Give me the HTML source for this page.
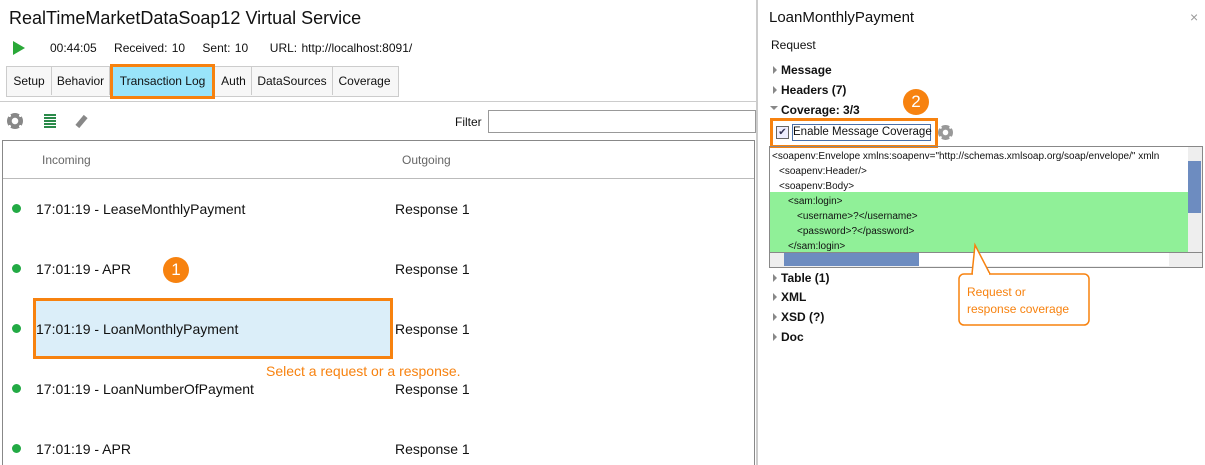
<!DOCTYPE html><html style="overflow:hidden;height:465px"><head><style>
body{margin:0;width:1205px;height:465px;background:#fff;font-family:"Liberation Sans",sans-serif;position:relative;overflow:hidden;color:#111}
.a{position:absolute;white-space:nowrap}
.tab{position:absolute;top:67px;height:28px;line-height:28px;font-size:12px;text-align:center;border-right:1px solid #ccc;background:#f7f7f7}
.row{font-size:14px}
.dot{position:absolute;width:9px;height:9px;border-radius:50%;background:#22aa44}
.tr{font-size:12px;font-weight:bold}
.tri{position:absolute;width:0;height:0;border-top:4px solid transparent;border-bottom:4px solid transparent;border-left:4px solid #888}
.code{font-size:10px;position:absolute;left:772px}
</style></head><body>
<div class="a" style="left:9px;top:8px;font-size:18px">RealTimeMarketDataSoap12 Virtual Service</div>
<div class="a" style="left:13px;top:41px;width:0;height:0;border-top:7px solid transparent;border-bottom:7px solid transparent;border-left:12px solid #2aa838"></div>
<div class="a" style="left:50px;top:41px;font-size:12px;word-spacing:1px">00:44:05&nbsp;&nbsp;&nbsp; Received: 10&nbsp;&nbsp;&nbsp; Sent: 10&nbsp;&nbsp;&nbsp;&nbsp; URL: http://localhost:8091/</div>
<div class="a" style="left:6px;top:66px;width:391px;height:29px;border:1px solid #ccc;background:#f7f7f7"></div>
<div class="tab" style="left:7px;width:44px">Setup</div>
<div class="tab" style="left:52px;width:57px">Behavior</div>
<div class="tab" style="left:110px;width:105px;background:#99e4fa;border:3px solid #f7820f;top:64px;box-sizing:border-box;height:35px;line-height:29px">Transaction Log</div>
<div class="tab" style="left:216px;width:35px;background:none">Auth</div>
<div class="tab" style="left:252px;width:80px;background:none">DataSources</div>
<div class="tab" style="left:333px;width:63px;background:none;border:0">Coverage</div>
<div class="a" style="left:0;top:101px;width:756px;height:1px;background:#ccc"></div>
<div class="a" style="left:7px;top:113px;width:16px;height:16px;border-radius:50%;background:radial-gradient(circle,#fff 3px,#888 3.5px,#888 6px,transparent 6.5px),conic-gradient(#888 0 10%,transparent 0 15%,#888 0 35%,transparent 0 40%,#888 0 60%,transparent 0 65%,#888 0 85%,transparent 0 90%,#888 0)"></div>
<div class="a" style="left:44px;top:114px;width:12px;height:14px;background:repeating-linear-gradient(#2a8a4a 0 2px,#fff 2px 3px)"></div>
<div class="a" style="left:79px;top:115px;width:5px;height:13px;background:#888;transform:rotate(40deg)"></div>
<div class="a" style="left:455px;top:115px;font-size:12px">Filter</div>
<div class="a" style="left:488px;top:110px;width:266px;height:21px;border:1px solid #999"></div>
<div class="a" style="left:2px;top:140px;width:751px;height:330px;border:1px solid #888;border-bottom:0"></div>
<div class="a" style="left:3px;top:178px;width:751px;height:1px;background:#bbb"></div>
<div class="a" style="left:42px;top:153px;font-size:12px;color:#666">Incoming</div>
<div class="a" style="left:402px;top:153px;font-size:12px;color:#666">Outgoing</div>
<div class="a" style="left:33px;top:298px;width:354px;height:55px;background:#dbeef9;border:3px solid #f7820f"></div>
<div class="dot" style="left:12px;top:204px"></div><div class="a row" style="left:36px;top:201px">17:01:19 - LeaseMonthlyPayment</div><div class="a row" style="left:395px;top:201px">Response 1</div>
<div class="dot" style="left:12px;top:264px"></div><div class="a row" style="left:36px;top:261px">17:01:19 - APR</div><div class="a row" style="left:395px;top:261px">Response 1</div>
<div class="dot" style="left:12px;top:324px"></div><div class="a row" style="left:36px;top:321px">17:01:19 - LoanMonthlyPayment</div><div class="a row" style="left:395px;top:321px">Response 1</div>
<div class="dot" style="left:12px;top:384px"></div><div class="a row" style="left:36px;top:381px">17:01:19 - LoanNumberOfPayment</div><div class="a row" style="left:395px;top:381px">Response 1</div>
<div class="dot" style="left:12px;top:444px"></div><div class="a row" style="left:36px;top:441px">17:01:19 - APR</div><div class="a row" style="left:395px;top:441px">Response 1</div>
<div class="a" style="left:163px;top:257px;width:26px;height:26px;border-radius:50%;background:#f7820f;color:#fff;font-size:17px;text-align:center;line-height:26px">1</div>
<div class="a" style="left:266px;top:363px;font-size:14px;color:#f7820f">Select a request or a response.</div>
<div class="a" style="left:756px;top:0;width:2px;height:465px;background:#ccc"></div>
<div class="a" style="left:769px;top:9px;font-size:15px">LoanMonthlyPayment</div>
<div class="a" style="left:1190px;top:9px;font-size:14px;color:#999">×</div>
<div class="a" style="left:771px;top:38px;font-size:12px">Request</div>
<div class="tri" style="left:773px;top:66px"></div><div class="a tr" style="left:781px;top:63px">Message</div>
<div class="tri" style="left:773px;top:86px"></div><div class="a tr" style="left:781px;top:83px">Headers (7)</div>
<div class="a" style="left:770px;top:106px;border-left:4px solid transparent;border-right:4px solid transparent;border-top:4px solid #888"></div><div class="a tr" style="left:781px;top:103px">Coverage: 3/3</div>
<div class="a" style="left:903px;top:89px;width:26px;height:26px;border-radius:50%;background:#f7820f;color:#fff;font-size:17px;text-align:center;line-height:26px">2</div>
<div class="a" style="left:770px;top:118px;width:162px;height:24px;border:3px solid #f7820f"></div>
<div class="a" style="left:776px;top:126px;width:11px;height:11px;border:1px solid #666;background:#eef;font-size:10px;line-height:11px;text-align:center;color:#335">✔</div>
<div class="a" style="left:792px;top:124px;width:137px;height:15px;border:1px solid #4a6fa8;font-size:11.5px;line-height:15px">Enable Message Coverage</div>
<div class="a" style="left:938px;top:125px;width:15px;height:15px;border-radius:50%;background:radial-gradient(circle,#fff 2.5px,#999 3px,#999 5.5px,transparent 6px),conic-gradient(#999 0 10%,transparent 0 15%,#999 0 35%,transparent 0 40%,#999 0 60%,transparent 0 65%,#999 0 85%,transparent 0 90%,#999 0)"></div>
<div class="a" style="left:769px;top:146px;width:432px;height:120px;border:1px solid #888;overflow:hidden">
<div class="a" style="left:0;top:45px;width:418px;height:60px;background:#90f098"></div>
<div class="a" style="left:418px;top:0;width:14px;height:105px;background:#eee"><div style="position:absolute;top:14px;width:13px;height:52px;background:#6d8cc0"></div></div>
<div class="a" style="left:0;top:105px;width:432px;height:14px;background:#eee;border-top:1px solid #888"><div style="position:absolute;left:14px;width:135px;height:13px;background:#6d8cc0"></div><div style="position:absolute;left:149px;width:250px;height:13px;background:#fff"></div></div>
</div>
<div class="code" style="top:151px">&lt;soapenv:Envelope xmlns:soapenv="http://schemas.xmlsoap.org/soap/envelope/" xmln</div>
<div class="code" style="top:166px;left:779px">&lt;soapenv:Header/&gt;</div>
<div class="code" style="top:181px;left:779px">&lt;soapenv:Body&gt;</div>
<div class="code" style="top:196px;left:788px">&lt;sam:login&gt;</div>
<div class="code" style="top:211px;left:797px">&lt;username&gt;?&lt;/username&gt;</div>
<div class="code" style="top:226px;left:797px">&lt;password&gt;?&lt;/password&gt;</div>
<div class="code" style="top:241px;left:788px">&lt;/sam:login&gt;</div>
<div class="tri" style="left:773px;top:274px"></div><div class="a tr" style="left:781px;top:271px">Table (1)</div>
<div class="tri" style="left:773px;top:293px"></div><div class="a tr" style="left:781px;top:290px">XML</div>
<div class="tri" style="left:773px;top:313px"></div><div class="a tr" style="left:781px;top:310px">XSD (?)</div>
<div class="tri" style="left:773px;top:333px"></div><div class="a tr" style="left:781px;top:330px">Doc</div>
<svg class="a" style="left:955px;top:240px" width="140" height="90"><path d="M17 34 L20 5 L35 34" fill="#fff" stroke="#f7820f" stroke-width="1.5"/><rect x="4" y="34" width="130" height="51" rx="5" fill="#fff" stroke="#f7820f" stroke-width="1.5"/><path d="M18 34 L34 34" stroke="#fff" stroke-width="2"/></svg>
<div class="a" style="left:967px;top:284px;font-size:12px;color:#f7820f;line-height:17px">Request or<br>response coverage</div>
</body></html>
